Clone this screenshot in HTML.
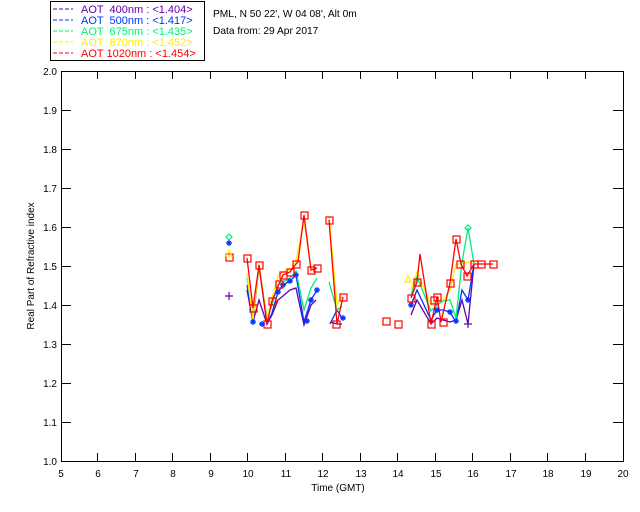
<!DOCTYPE html>
<html><head><style>
html,body{margin:0;padding:0;background:#fff;}
svg{display:block;font-family:"Liberation Sans",sans-serif;}
</style></head><body>
<svg width="640" height="512" viewBox="0 0 640 512" xmlns="http://www.w3.org/2000/svg">
<rect width="640" height="512" fill="#fff"/>
<rect x="50.5" y="1.5" width="154" height="59" fill="none" stroke="#000"/>
<g font-size="11">
<line x1="53" y1="9" x2="73" y2="9" stroke="#6600aa" stroke-dasharray="4,2"/>
<text x="81" y="13" fill="#6600aa" xml:space="preserve">AOT  400nm : &lt;1.404&gt;</text>
<line x1="53" y1="20" x2="73" y2="20" stroke="#0033ff" stroke-dasharray="4,2"/>
<text x="81" y="24" fill="#0033ff" xml:space="preserve">AOT  500nm : &lt;1.417&gt;</text>
<line x1="53" y1="31" x2="73" y2="31" stroke="#00ee77" stroke-dasharray="4,2"/>
<text x="81" y="35" fill="#00ee77" xml:space="preserve">AOT  675nm : &lt;1.435&gt;</text>
<line x1="53" y1="42" x2="73" y2="42" stroke="#ffee00" stroke-dasharray="4,2"/>
<text x="81" y="46" fill="#ffee00" xml:space="preserve">AOT  870nm : &lt;1.452&gt;</text>
<line x1="53" y1="53" x2="73" y2="53" stroke="#ff0000" stroke-dasharray="4,2"/>
<text x="81" y="57" fill="#ff0000" xml:space="preserve">AOT 1020nm : &lt;1.454&gt;</text>
</g>
<text x="213" y="17" font-size="10.2" fill="#000">PML, N 50 22', W 04 08', Alt 0m</text>
<text x="213" y="34" font-size="10.2" fill="#000">Data from: 29 Apr 2017</text>
<rect x="61.5" y="71.5" width="562" height="390" fill="none" stroke="#000"/>
<g stroke="#000">
<path d="M61 110.5h10M61 149.5h10M61 188.5h10M61 227.5h10M61 266.5h10M61 305.5h10M61 344.5h10M61 383.5h10M61 422.5h10"/>
<path d="M623 110.5h-10M623 149.5h-10M623 188.5h-10M623 227.5h-10M623 266.5h-10M623 305.5h-10M623 344.5h-10M623 383.5h-10M623 422.5h-10"/>
<path d="M97.5 461v-8M135.5 461v-8M172.5 461v-8M210.5 461v-8M247.5 461v-8M285.5 461v-8M322.5 461v-8M360.5 461v-8M397.5 461v-8M435.5 461v-8M472.5 461v-8M510.5 461v-8M547.5 461v-8M585.5 461v-8"/>
<path d="M97.5 71v8M135.5 71v8M172.5 71v8M210.5 71v8M247.5 71v8M285.5 71v8M322.5 71v8M360.5 71v8M397.5 71v8M435.5 71v8M472.5 71v8M510.5 71v8M547.5 71v8M585.5 71v8"/>
</g>
<g font-size="10" fill="#000" text-anchor="end">
<text x="57" y="75">2.0</text><text x="57" y="114">1.9</text><text x="57" y="153">1.8</text><text x="57" y="192">1.7</text><text x="57" y="231">1.6</text><text x="57" y="270">1.5</text><text x="57" y="309">1.4</text><text x="57" y="348">1.3</text><text x="57" y="387">1.2</text><text x="57" y="426">1.1</text><text x="57" y="465">1.0</text>
</g>
<g font-size="10" fill="#000" text-anchor="middle">
<text x="61" y="477">5</text><text x="98" y="477">6</text><text x="136" y="477">7</text><text x="173" y="477">8</text><text x="211" y="477">9</text><text x="248" y="477">10</text><text x="286" y="477">11</text><text x="323" y="477">12</text><text x="361" y="477">13</text><text x="398" y="477">14</text><text x="436" y="477">15</text><text x="473" y="477">16</text><text x="511" y="477">17</text><text x="548" y="477">18</text><text x="586" y="477">19</text><text x="623" y="477">20</text>
<text x="338" y="491">Time (GMT)</text>
<text x="0" y="0" transform="translate(34,266) rotate(-90)">Real Part of Refractive index</text>
</g>
<g fill="none" stroke-width="1.3">
<polyline stroke="#6600aa" points="247,290 253,322 259,300 267,324 272,315 278,300 283,296 290,290 296,288 304,325 311,305 316,300"/>
<polyline stroke="#6600aa" points="330,322 337,324 342,324"/>
<polyline stroke="#6600aa" points="411,315 417,300 431,324 437,318 443,320 450,322 456,320 462,300 468,324 474,264"/>
<polyline stroke="#0033ff" points="247,285 253,322 259,266 267,324 272,313 278,292 283,285 290,281 296,275 304,322 311,300 317,290"/>
<polyline stroke="#0033ff" points="330,324 337,310 342,318"/>
<polyline stroke="#0033ff" points="411,305 417,290 431,320 437,310 443,310 450,312 456,322 462,290 468,300 474,264"/>
<polyline stroke="#00ee77" points="247,278 253,317 259,266 267,318 272,305 278,285 283,282 290,278 296,271 304,310 311,288 317,278"/>
<polyline stroke="#00ee77" points="329,282 337,310 342,306"/>
<polyline stroke="#00ee77" points="411,295 417,277 431,311 437,305 443,301 450,300 456,318 462,262 468,228 474,264"/>
<polyline stroke="#ffee00" points="247,274 253,320 259,264 267,320 272,298 278,276 283,272 290,270 296,262 304,220 311,270 317,268"/>
<polyline stroke="#ffee00" points="329,216 337,305 342,296"/>
<polyline stroke="#ffee00" points="411,290 417,272 431,305 437,300 443,300 450,290 456,264 462,264 468,262 474,264"/>
<polyline stroke="#ff0000" points="247,258 253,308 259,265 267,324 272,301 279,284 283,275 290,272 296,264 298,262 304,215 311,270 317,268"/>
<polyline stroke="#ff0000" points="329,220 337,324 343,297"/>
<polyline stroke="#ff0000" points="411,298 417,282 420,254 431,324 437,297 441,322 450,283 456,239 461,264 467,276 474,264 481,264 493,264"/>
</g>
<g fill="none" stroke="#0033ff" stroke-width="1.2">
<path d="M250 322h6M253 319v6M251 320l4 4M255 320l-4 4"/>
<path d="M275 292h6M278 289v6M276 290l4 4M280 290l-4 4"/>
<path d="M280 285h6M283 282v6M281 283l4 4M285 283l-4 4"/>
<path d="M287 281h6M290 278v6M288 279l4 4M292 279l-4 4"/>
<path d="M293 275h6M296 272v6M294 273l4 4M298 273l-4 4"/>
<path d="M308 300h6M311 297v6M309 298l4 4M313 298l-4 4"/>
<path d="M314 290h6M317 287v6M315 288l4 4M319 288l-4 4"/>
<path d="M408 305h6M411 302v6M409 303l4 4M413 303l-4 4"/>
<path d="M434 310h6M437 307v6M435 308l4 4M439 308l-4 4"/>
<path d="M447 312h6M450 309v6M448 310l4 4M452 310l-4 4"/>
<path d="M465 300h6M468 297v6M466 298l4 4M470 298l-4 4"/>
</g>
<g fill="none" stroke="#ff0000" stroke-width="1.2">
<rect x="226" y="254" width="7" height="7"/><rect x="244" y="255" width="7" height="7"/><rect x="250" y="305" width="7" height="7"/><rect x="256" y="262" width="7" height="7"/><rect x="264" y="321" width="7" height="7"/><rect x="269" y="298" width="7" height="7"/><rect x="276" y="281" width="7" height="7"/><rect x="280" y="272" width="7" height="7"/><rect x="287" y="269" width="7" height="7"/><rect x="293" y="261" width="7" height="7"/><rect x="301" y="212" width="7" height="7"/><rect x="308" y="267" width="7" height="7"/><rect x="314" y="265" width="7" height="7"/><rect x="326" y="217" width="7" height="7"/><rect x="333" y="321" width="7" height="7"/><rect x="340" y="294" width="7" height="7"/>
<rect x="383" y="318" width="7" height="7"/><rect x="395" y="321" width="7" height="7"/><rect x="408" y="295" width="7" height="7"/><rect x="414" y="279" width="7" height="7"/><rect x="428" y="321" width="7" height="7"/><rect x="431" y="297" width="7" height="7"/><rect x="434" y="294" width="7" height="7"/><rect x="440" y="319" width="7" height="7"/><rect x="447" y="280" width="7" height="7"/><rect x="453" y="236" width="7" height="7"/><rect x="457" y="261" width="7" height="7"/><rect x="464" y="273" width="7" height="7"/><rect x="471" y="261" width="7" height="7"/><rect x="478" y="261" width="7" height="7"/><rect x="490" y="261" width="7" height="7"/>
</g>
<g stroke-width="1.2" fill="none">
<path d="M229 234l3 3-3 3-3-3z" stroke="#00ee77"/>
<path d="M226 243h6M229 240v6M227 241l4 4M231 241l-4 4" stroke="#0033ff"/>
<path d="M229 250l3 6h-6z" stroke="#ffee00"/>
<path d="M225 296h8M229 292v8" stroke="#6600aa"/>
<path d="M259 324h6M262 321v6M260 322l4 4M264 322l-4 4" stroke="#0033ff"/>
<path d="M304 321h6M307 318v6M305 319l4 4M309 319l-4 4" stroke="#0033ff"/>
<path d="M340 318h6M343 315v6M341 316l4 4M345 316l-4 4" stroke="#0033ff"/>
<path d="M453 321h6M456 318v6M454 319l4 4M458 319l-4 4" stroke="#0033ff"/>
<path d="M464 324h8M468 320v8" stroke="#6600aa"/>
<path d="M468 225l3 3-3 3-3-3z" stroke="#00ee77"/>
<path d="M408 276l3 6h-6z" stroke="#ffee00"/>
</g>
</svg>
</body></html>
